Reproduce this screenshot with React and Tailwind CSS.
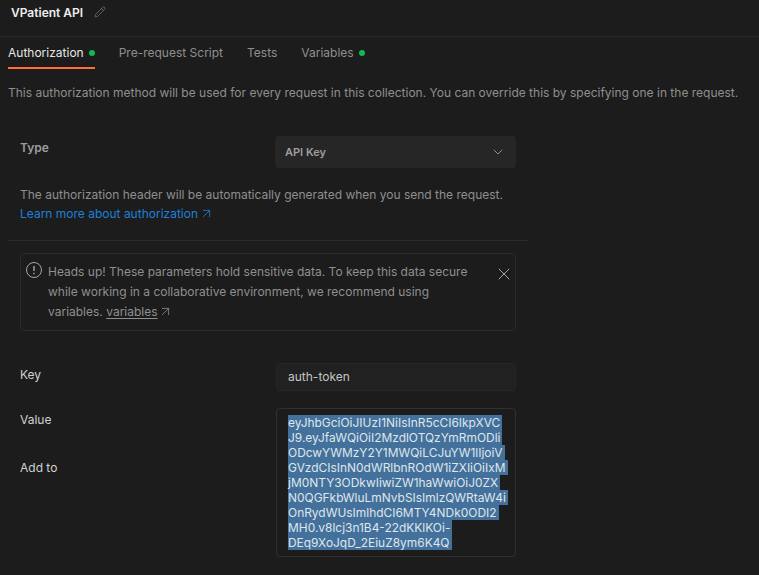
import { Pencil, ChevronDown, ArrowUpRight, X } from "lucide-react";

const tabs = [
  { label: "Authorization", dot: true, active: true },
  { label: "Pre-request Script" },
  { label: "Tests" },
  { label: "Variables", dot: true },
];

const tokenLines = [
  "eyJhbGciOiJIUzI1NiIsInR5cCI6IkpXVC",
  "J9.eyJfaWQiOiI2MzdlOTQzYmRmODli",
  "ODcwYWMzY2Y1MWQiLCJuYW1lIjoiV",
  "GVzdCIsInN0dWRlbnROdW1iZXIiOiIxM",
  "jM0NTY3ODkwIiwiZW1haWwiOiJ0ZX",
  "N0QGFkbWluLmNvbSIsImlzQWRtaW4i",
  "OnRydWUsImlhdCI6MTY4NDk0ODI2",
  "MH0.v8lcj3n1B4-22dKKlKOi-",
  "DEq9XoJqD_2EiuZ8ym6K4Q",
];

export default function App() {
  return (
    <div className="h-[575px] w-[759px] overflow-hidden bg-[#1c1c1c] font-['Inter',sans-serif] text-xs text-[#a6a6a6]">
      {/* Collection name */}
      <div className="flex h-[37px] items-start gap-[11px] border-b border-[#292929] pl-[11px] pt-[5px]">
        <span className="text-xs font-semibold leading-4 text-[#ededed]">VPatient API</span>
        <Pencil size={12} strokeWidth={1.2} className="mt-[1px] text-[#8c8c8c]" />
      </div>

      {/* Tabs */}
      <div className="flex gap-6 pl-2">
        {tabs.map((tab) => (
          <div
            key={tab.label}
            className={`flex h-[32px] items-center gap-[5px] border-b-2 pt-[1px] ${
              tab.active ? "border-[#ff6c37] text-[#e6e6e6]" : "border-transparent text-[#8f8f8f]"
            }`}
          >
            {tab.label}
            {tab.dot && <span className="h-[6px] w-[6px] rounded-full bg-[#0cbb52]" />}
          </div>
        ))}
      </div>

      <p className="mt-[16px] pl-2 text-xs leading-4 text-[#8f8f8f]">
        This authorization method will be used for every request in this collection. You can override this by specifying one in the request.
      </p>

      <div className="mt-[35px] w-[528px] pl-2">
        {/* Auth type */}
        <div className="border-b border-[#2b2b2b] pb-[17px] pl-3">
          <div className="flex items-start">
            <span className="mt-[4px] w-[255px] font-semibold leading-4 text-[#9e9e9e]">Type</span>
            <div className="flex h-[32px] w-[241px] items-center justify-between rounded bg-[#262626] pl-[10px] pr-[10px]">
              <span className="text-[11px] font-semibold text-[#9e9e9e]">API Key</span>
              <ChevronDown size={16} strokeWidth={1.2} className="text-[#a6a6a6]" />
            </div>
          </div>
          <p className="mt-[17px] leading-[19px] text-[#8f8f8f]">
            The authorization header will be automatically generated when you send the request.
          </p>
          <a className="flex h-[19px] items-center gap-[1px] leading-[19px] text-[#1d80d8]">
            Learn more about authorization
            <ArrowUpRight size={15} strokeWidth={1.3} />
          </a>
        </div>

        {/* Warning */}
        <div className="relative ml-3 mt-3 h-[78px] w-[496px] rounded border border-[#2b2b2b] pl-[5px] pt-[8px]">
          <div className="flex gap-[6px]">
            <svg width="16" height="16" viewBox="0 0 16 16" fill="none" stroke="#a6a6a6" strokeWidth="1" className="shrink-0">
              <circle cx="8" cy="8" r="7.5" />
              <path d="M8 4v5M8 10.8v1.4" strokeWidth="1.4" />
            </svg>
            <p className="w-[425px] leading-5 text-[#8f8f8f]">
              Heads up! These parameters hold sensitive data. To keep this data secure while working in a collaborative environment, we recommend using variables.{" "}
              <span className="underline underline-offset-2">variables</span>
              <ArrowUpRight size={15} strokeWidth={1.3} className="inline align-[-3px]" />
            </p>
          </div>
          <X size={20} strokeWidth={1.1} className="absolute right-[1px] top-[10px] text-[#b3b3b3]" />
        </div>

        {/* Key and value */}
        <div className="mt-[32px] flex pl-3">
          <div className="w-[256px] leading-4 text-[#d0d0d0]">
            <div className="pt-[4px]">Key</div>
            <div className="mt-[29px]">Value</div>
            <div className="mt-[32px]">Add to</div>
          </div>
          <div className="w-[240px]">
            <div className="flex h-[28px] items-center rounded border border-[#262626] bg-[#212121] pl-[11px] text-[#c4c4c4]">
              auth-token
            </div>
            <div className="mt-[17px] h-[149px] rounded border border-[#303030] pl-[11px] pt-[6px]">
              {tokenLines.map((line) => (
                <div key={line} className="h-[15px] w-fit whitespace-nowrap bg-[#44719b] pr-[2px] text-[11.95px] leading-[15px] text-[#dfe6ec]">
                  {line}
                </div>
              ))}
            </div>
          </div>
        </div>
      </div>
    </div>
  );
}
